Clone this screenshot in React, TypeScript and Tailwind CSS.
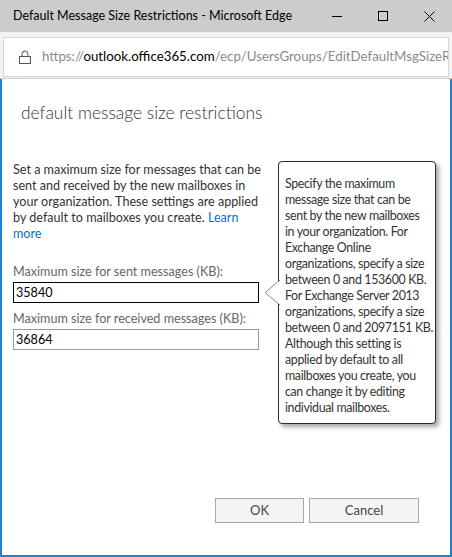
import React from "react";

const font = { fontFamily: "Lato, 'Noto Sans', sans-serif" };

const calloutLines = [
  "Specify the maximum",
  "message size that can be",
  "sent by the new mailboxes",
  "in your organization. For",
  "Exchange Online",
  "organizations, specify a size",
  "between 0 and 153600 KB.",
  "For Exchange Server 2013",
  "organizations, specify a size",
  "between 0 and 2097151 KB.",
  "Although this setting is",
  "applied by default to all",
  "mailboxes you create, you",
  "can change it by editing",
  "individual mailboxes.",
];

function Callout() {
  return (
    <div className="absolute left-[276px] top-[82px] w-[158px] rounded-[4px] border border-[#2b2b2b] bg-white pb-[7px] pl-[6px] pt-[14px] text-[12.4px] leading-[16px] tracking-[-0.35px] whitespace-nowrap text-[#333] shadow-[3px_3px_4px_rgba(0,0,0,0.35)]">
      <svg
        className="absolute left-[-15px] top-[118px]"
        width="16"
        height="26"
        viewBox="0 0 16 26"
      >
        <polygon points="16,0 1,12.5 16,25" fill="white" />
        <polyline points="16,0 1,12.5 16,25" fill="none" stroke="#8a8a8a" strokeWidth="1" />
      </svg>
      {calloutLines.map((line, i) => (
        <div key={i}>{line}</div>
      ))}
    </div>
  );
}

export default function App() {
  return (
    <div className="flex h-[557px] w-[452px] flex-col bg-white" style={font}>
      {/* title bar */}
      <div className="flex h-[32px] items-center bg-[#cccccc] text-[12.5px] text-black">
        <span className="pl-[13px]">Default Message Size Restrictions - Microsoft Edge</span>
        <div className="ml-auto flex items-center">
          <div className="flex h-[32px] w-[46px] items-center justify-center">
            <div className="h-px w-[10px] bg-black" />
          </div>
          <div className="flex h-[32px] w-[46px] items-center justify-center">
            <div className="h-[10px] w-[10px] border border-black" />
          </div>
          <div className="flex h-[32px] w-[46px] items-center justify-center">
            <svg width="11" height="11" viewBox="0 0 11 11">
              <path d="M0.5 0.5 L10.5 10.5 M10.5 0.5 L0.5 10.5" stroke="black" strokeWidth="1" />
            </svg>
          </div>
        </div>
      </div>

      {/* address bar */}
      <div className="h-[47px] border-b border-[#cfcfcf] bg-[#f2f2f2] px-[3px] pt-[5px]">
        <div className="flex h-[40px] items-center overflow-hidden border border-[#d6d6d6] bg-white">
          <svg className="ml-[15px] mr-[11px] shrink-0" width="12" height="14" viewBox="0 0 12 14">
            <path d="M3 6.5 V4 a3 3 0 0 1 6 0 V6.5" fill="none" stroke="#555" strokeWidth="1" />
            <rect x="0.5" y="6.5" width="11" height="7" fill="none" stroke="#555" strokeWidth="1" />
          </svg>
          <span className="whitespace-nowrap text-[13.3px] text-[#8a8a8a]">
            https://<span className="text-black">outlook.office365.com</span>/ecp/UsersGroups/EditDefaultMsgSizeRestrictions.aspx
          </span>
        </div>
      </div>

      {/* page */}
      <div className="relative flex flex-1 flex-col border-x-2 border-b-2 border-[#1883d7]">
        <h1 className="pl-[19px] pt-[22px] text-[17.4px] font-light leading-[24px] text-[#333]">
          default message size restrictions
        </h1>

        <div className="w-[266px] pl-[11px]">
          <p className="mt-[37px] text-[12.6px] leading-[16px] text-[#333]">
            Set a maximum size for messages that can be sent and received by the new mailboxes in your
            organization. These settings are applied by default to mailboxes you create.{" "}
            <a className="text-[#0a6fc2]">Learn more</a>
          </p>

          <label className="mt-[22px] block text-[12.6px] leading-[16px] text-[#666]">
            Maximum size for sent messages (KB):
          </label>
          <input
            defaultValue="35840"
            className="mt-[2px] block h-[21px] w-[246px] border border-black px-[2px] text-[12.6px] text-black outline-none"
          />

          <label className="mt-[8px] block text-[12.6px] leading-[16px] text-[#666]">
            Maximum size for received messages (KB):
          </label>
          <input
            defaultValue="36864"
            className="mt-[2px] block h-[21px] w-[246px] border border-[#9a9a9a] px-[2px] text-[12.6px] text-black outline-none"
          />
        </div>

        <Callout />

        <div className="mt-auto flex justify-end gap-[5px] pb-[32px] pr-[31px]">
          <button className="h-[25px] w-[89px] border border-[#a3a9ad] bg-[#f4f4f4] text-[13px] text-[#444]">
            OK
          </button>
          <button className="h-[25px] w-[110px] border border-[#a3a9ad] bg-[#f4f4f4] text-[13px] text-[#444]">
            Cancel
          </button>
        </div>
      </div>
    </div>
  );
}
